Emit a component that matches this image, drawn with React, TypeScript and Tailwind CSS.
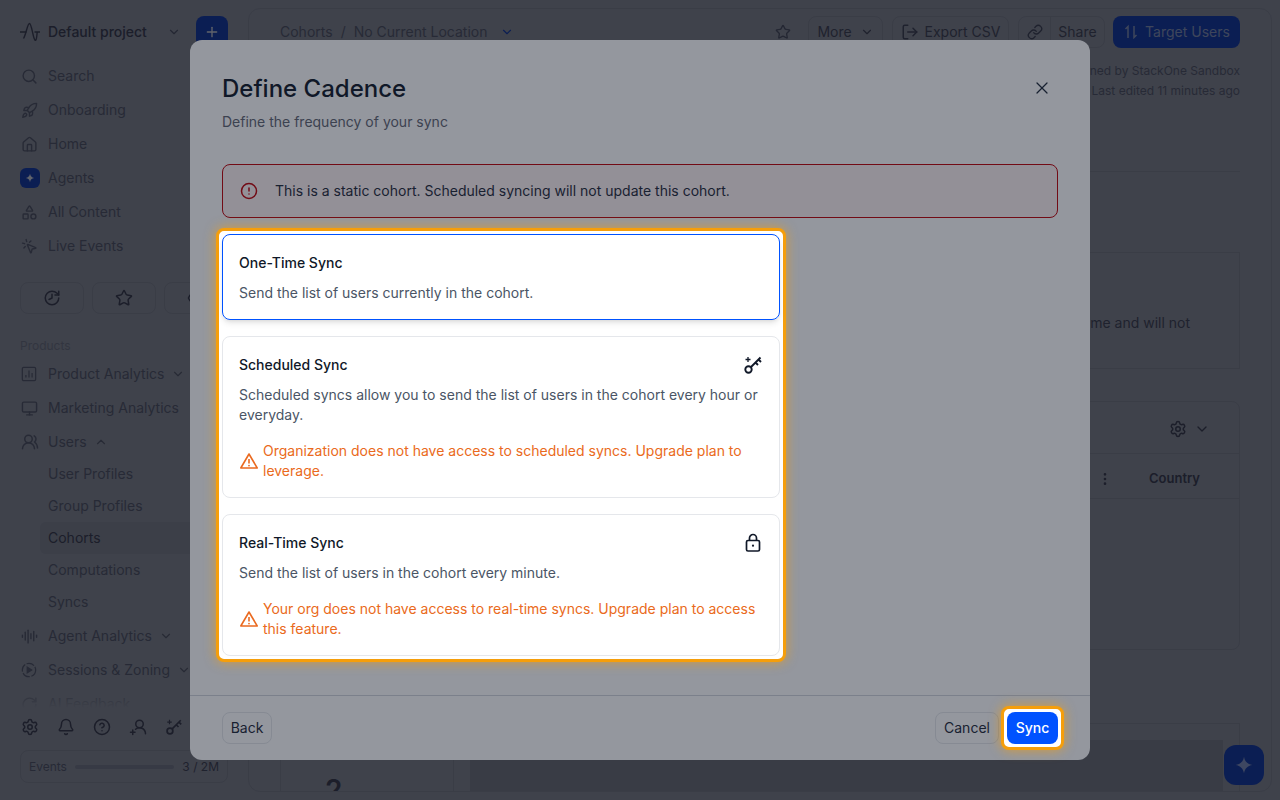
import {
  AudioLines,
  Bell,
  ChevronDown,
  ChevronUp,
  CircleAlert,
  CircleHelp,
  Eye,
  History,
  House,
  Link,
  LogOut,
  Monitor,
  MoreVertical,
  MousePointerClick,
  Plus,
  Rocket,
  RotateCw,
  Search,
  Settings,
  Shapes,
  Star,
  UserRoundPlus,
  UsersRound,
  X,
} from "lucide-react";
import type { ReactNode } from "react";

function Sparkle({ className }: { className?: string }) {
  return (
    <svg viewBox="0 0 24 24" className={className} fill="currentColor">
      <path d="M12 2c.8 5.6 4.4 9.200 10 10-5.600.8-9.200 4.400-10 10-.8-5.600-4.400-9.200-10-10 5.600-.8 9.200-4.400 10-10z" />
    </svg>
  );
}

function Logo() {
  return (
    <svg viewBox="0 0 20 20" className="h-5 w-5 text-[#32303b]" fill="none" stroke="currentColor" strokeWidth="1.400">
      <path d="M0 10h6.500M14.500 10H20" />
      <path d="M3.500 16.500C6 12.500 7.500 1.500 9.500 1.500c1.700 0 3 10 4.500 14.500.6 1.700 1.300 2.800 1.900 2.100.5-.6.9-3.100 1.300-8.100" />
    </svg>
  );
}

function KeySpark({ className }: { className?: string }) {
  return (
    <svg viewBox="0 0 20 20" className={className} fill="none" stroke="currentColor" strokeWidth="1.900">
      <circle cx="5.500" cy="14.500" r="3.200" />
      <path d="M8 12 17.500 2.500M12.500 7.500l2.500 2.500M15.500 4.500 18 7" />
      <path d="M5 2v5M2.500 4.500h5" strokeWidth="1.300" />
    </svg>
  );
}

function LockDot({ className }: { className?: string }) {
  return (
    <svg viewBox="0 0 20 20" className={className} fill="none" stroke="currentColor" strokeWidth="1.700">
      <rect x="3.500" y="7.500" width="13" height="10.500" rx="1.500" />
      <path d="M6.500 7.500V5a3.500 3.500 0 0 1 7 0v2.500" />
      <circle cx="10" cy="12.700" r="1.100" fill="currentColor" stroke="none" />
    </svg>
  );
}

function BarsBox({ className }: { className?: string }) {
  return (
    <svg viewBox="0 0 18 18" className={className} fill="none" stroke="currentColor" strokeWidth="1.400">
      <rect x="1.500" y="1.500" width="15" height="15" rx="1.500" />
      <path d="M5.500 13v-3M9 13V5M12.500 13V8" />
    </svg>
  );
}

function DashedPlay({ className }: { className?: string }) {
  return (
    <svg viewBox="0 0 18 18" className={className} fill="none" stroke="currentColor" strokeWidth="1.400">
      <circle cx="9" cy="9" r="7.500" strokeDasharray="9 1.800" />
      <path d="M7 5.800v6.400L12 9z" fill="currentColor" />
    </svg>
  );
}

function WarnTriangle({ className }: { className?: string }) {
  return (
    <svg viewBox="0 0 20 20" className={className} fill="none" stroke="currentColor" strokeWidth="1.600">
      <path d="M10 3 18.200 17H1.800z" strokeLinejoin="round" />
      <path d="M10 8v4.500" />
      <circle cx="10" cy="14.600" r=".9" fill="currentColor" stroke="none" />
    </svg>
  );
}

function NavRow({ icon, label, chevron }: { icon: ReactNode; label: string; chevron?: "down" | "up" }) {
  return (
    <div className="flex h-[34px] items-center pl-[1px] text-sm text-[#55555f]">
      <span className="flex w-[27px] shrink-0 items-center">{icon}</span>
      <span>{label}</span>
      {chevron === "down" && <ChevronDown className="ml-[7px] h-3.5 w-3.5" />}
      {chevron === "up" && <ChevronUp className="ml-[7px] h-3.5 w-3.5" />}
    </div>
  );
}

function SubRow({ label, active }: { label: string; active?: boolean }) {
  return (
    <div className={`ml-5 flex h-8 items-center rounded-md pl-2 text-sm ${active ? "bg-[#939396] text-[#32303b]" : "text-[#55555f]"}`}>
      {label}
    </div>
  );
}

function Sidebar() {
  return (
    <aside className="flex h-[800px] w-[248px] shrink-0 flex-col px-5">
      <div className="mt-4 flex h-8 items-center">
        <Logo />
        <span className="ml-2 whitespace-nowrap text-sm font-medium text-[#32303b]">Default project</span>
        <ChevronDown className="ml-5 h-3.5 w-3.5 shrink-0 text-[#4a4a55]" />
        <span className="ml-auto flex h-8 w-8 shrink-0 items-center justify-center rounded-lg bg-[#0030b8] text-white">
          <Plus className="h-4 w-4" />
        </span>
      </div>

      <div className="relative mt-[11px] h-[649px] overflow-hidden">
        <NavRow icon={<Search className="h-[17px] w-[17px]" />} label="Search" />
        <NavRow icon={<Rocket className="h-[17px] w-[17px]" />} label="Onboarding" />
        <NavRow icon={<House className="h-[17px] w-[17px]" />} label="Home" />
        <div className="flex h-[34px] items-center text-sm text-[#55555f]">
          <span className="mr-2 flex h-5 w-5 items-center justify-center rounded-md bg-[#0030b8] text-white">
            <Sparkle className="h-2.5 w-2.5" />
          </span>
          Agents
        </div>
        <NavRow icon={<Shapes className="h-[17px] w-[17px]" />} label="All Content" />
        <NavRow icon={<MousePointerClick className="h-[17px] w-[17px]" />} label="Live Events" />

        <div className="mt-[19px] grid grid-cols-3 gap-2">
          {[
            <History key="h" className="h-[18px] w-[18px] -scale-x-100" />,
            <Star key="s" className="h-[18px] w-[18px]" />,
            <Eye key="e" className="h-[18px] w-[18px]" />,
          ].map((icon, i) => (
            <span key={i} className="flex h-8 items-center justify-center rounded-lg border border-[#8e8e92] text-[#32303b]">
              {icon}
            </span>
          ))}
        </div>

        <div className="mt-6 text-xs leading-4 text-[#77777e]">Products</div>
        <div className="mt-[3px]">
          <NavRow icon={<BarsBox className="h-4 w-4" />} label="Product Analytics" chevron="down" />
          <NavRow icon={<Monitor className="h-[17px] w-[17px]" />} label="Marketing Analytics" />
          <NavRow icon={<UsersRound className="h-[18px] w-[18px]" />} label="Users" chevron="up" />
        </div>
        <div className="-mt-px">
          <SubRow label="User Profiles" />
          <SubRow label="Group Profiles" />
          <SubRow label="Cohorts" active />
          <SubRow label="Computations" />
          <SubRow label="Syncs" />
        </div>
        <div className="mt-px">
          <NavRow icon={<AudioLines className="h-[17px] w-[17px]" />} label="Agent Analytics" chevron="down" />
          <NavRow icon={<DashedPlay className="h-4 w-4" />} label="Sessions & Zoning" chevron="down" />
          <NavRow icon={<RotateCw className="h-[17px] w-[17px]" />} label="AI Feedback" />
        </div>
        <div className="absolute inset-x-0 bottom-0 h-5 bg-gradient-to-b from-transparent to-[#9c9c9f]" />
      </div>

      <div className="mt-[10px] flex h-[18px] items-center gap-[18px] pl-[1px] text-[#32303b]">
        <Settings className="h-[18px] w-[18px]" />
        <Bell className="h-[18px] w-[18px]" />
        <CircleHelp className="h-[18px] w-[18px]" />
        <UserRoundPlus className="h-[18px] w-[18px] -scale-x-100" />
        <KeySpark className="h-[18px] w-[18px]" />
      </div>

      <div className="mt-[14px] flex h-[33px] items-center rounded-lg border border-[#8e8e92] px-2 text-xs text-[#55555f]">
        <span className="shrink-0">Events</span>
        <span className="ml-2 h-1 min-w-0 flex-1 rounded-full bg-[#85858c]" />
        <span className="ml-2 shrink-0 whitespace-nowrap text-[#3c3b47]">3 / 2M</span>
      </div>
    </aside>
  );
}

function Main() {
  return (
    <main className="my-2 mr-2 flex h-[784px] w-[1024px] flex-col overflow-hidden rounded-xl border border-[#8e8e92] px-[31px] pt-[7px] text-[#3c3b47]">
      <header className="flex h-8 items-center text-sm">
        <span className="text-[#55555f]">Cohorts</span>
        <span className="mx-2 text-[#55555f]">/</span>
        <span className="text-[#55555f]">No Current Location</span>
        <ChevronDown className="ml-[13px] h-3.5 w-3.5 text-[#0030b8]" />
        <Star className="ml-auto h-4 w-4 text-[#4a4a55]" />
        <span className="ml-[17px] flex h-8 w-[75px] items-center justify-center gap-2 rounded-lg border border-[#8e8e92]">
          More <ChevronDown className="h-3.5 w-3.5" />
        </span>
        <span className="ml-[9px] flex h-8 w-[117px] items-center justify-center gap-1.5 rounded-lg border border-[#8e8e92]">
          <LogOut className="h-[18px] w-[18px]" /> Export CSV
        </span>
        <span className="ml-[9px] flex h-8 w-[87px] items-center rounded-lg border border-[#8e8e92]">
          <span className="flex h-full w-8 items-center justify-center border-r border-[#8e8e92]">
            <Link className="h-4 w-4" />
          </span>
          <span className="flex-1 text-center">Share</span>
        </span>
        <span className="ml-2 flex h-8 w-[127px] items-center justify-center gap-1.5 rounded-lg bg-[#0030b8] text-[#9aa8d0]">
          <svg viewBox="0 0 16 16" className="h-4 w-4" fill="none" stroke="currentColor" strokeWidth="1.500">
            <path d="M5 14V2.500L2.500 5M11 2v11.500L13.500 11" />
          </svg>
          Target Users
        </span>
      </header>

      <div className="mt-[13px] text-right text-xs leading-5 text-[#55555f]">
        <div>Owned by StackOne Sandbox</div>
        <div>Last edited 11 minutes ago</div>
      </div>

      <div className="mt-[70px] border-b border-[#8e8e92]" />

      <section className="mt-[80px] flex h-[118px] items-center justify-end border border-[#8e8e92] pt-6 pr-[49px] text-sm">
        <span className="whitespace-nowrap">This cohort was computed at a single point in time and will not</span>
      </section>

      <section className="mt-8 h-[249px] shrink-0 rounded-lg border border-[#8e8e92]">
        <div className="flex h-[52px] items-center justify-end gap-[7px] border-b border-[#8e8e92] pt-[2px] pr-[29px] text-[#32303b]">
          <Settings className="h-[18px] w-[18px]" />
          <ChevronDown className="h-4 w-4" />
        </div>
        <div className="flex h-[45px] items-center border-b border-[#8e8e92] pt-[6px] text-[13px] font-semibold text-[#32303b]">
          <MoreVertical className="ml-auto h-4 w-4" />
          <span className="ml-[36px] mr-[39px]">Country</span>
        </div>
      </section>

      <section className="mt-[73px] flex h-[68px] shrink-0 gap-4 border-t border-r border-[#8e8e92]">
        <div className="w-[174px] overflow-hidden border-x border-[#8e8e92] pt-[50px] pl-[44px] text-[28px] leading-8 font-semibold text-[#32303b]">
          2
        </div>
        <div className="mt-4 mr-4 flex-1 bg-[#8a8a8e]" />
      </section>
    </main>
  );
}

function WarnLine({ children }: { children: ReactNode }) {
  return (
    <div className="mt-4 flex items-center gap-1 text-sm leading-5 text-[#ea6a20]">
      <WarnTriangle className="h-5 w-5 shrink-0" />
      <span>{children}</span>
    </div>
  );
}

function Modal() {
  return (
    <div className="absolute left-[190px] top-[40px] flex h-[720px] w-[900px] flex-col rounded-xl bg-white">
      <div className="relative flex-1 px-8 pt-[33px]">
        <h2 className="text-2xl leading-8 font-medium text-gray-900">Define Cadence</h2>
        <p className="mt-[7px] text-sm leading-5 text-[#5f6472]">Define the frequency of your sync</p>
        <X strokeWidth={1.5} className="absolute right-[38px] top-[38px] h-5 w-5 text-gray-800" />

        <div className="mt-8 flex h-[54px] items-center gap-[17px] rounded-lg border border-red-700 bg-red-50 px-[17px] text-sm text-gray-800">
          <CircleAlert className="h-[18px] w-[18px] shrink-0 text-red-700" />
          This is a static cohort. Scheduled syncing will not update this cohort.
        </div>

        {/* highlighted group sits above the second overlay */}
        <div className="relative z-30 -mx-[6px] mt-[10px] w-[570px] rounded-lg border-[3px] border-[#f59e0b] bg-white p-[3px] shadow-[0_0_12px_#f59e0bb0]">
          <div className="rounded-lg border border-[#0052ff] p-4 shadow-md">
            <div className="text-sm leading-6 font-medium text-gray-900">One-Time Sync</div>
            <p className="mt-2 text-sm leading-5 text-gray-600">Send the list of users currently in the cohort.</p>
          </div>

          <div className="mt-4 rounded-lg border border-gray-200 p-4">
            <div className="flex items-center justify-between">
              <span className="text-sm leading-6 font-medium text-gray-900">Scheduled Sync</span>
              <KeySpark className="h-5 w-5 text-gray-900" />
            </div>
            <p className="mt-2 text-sm leading-5 text-gray-600">
              Scheduled syncs allow you to send the list of users in the cohort every hour or everyday.
            </p>
            <WarnLine>Organization does not have access to scheduled syncs. Upgrade plan to leverage.</WarnLine>
          </div>

          <div className="mt-4 rounded-lg border border-gray-200 p-4">
            <div className="flex items-center justify-between">
              <span className="text-sm leading-6 font-medium text-gray-900">Real-Time Sync</span>
              <LockDot className="h-5 w-5 text-gray-900" />
            </div>
            <p className="mt-2 text-sm leading-5 text-gray-600">Send the list of users in the cohort every minute.</p>
            <WarnLine>Your org does not have access to real-time syncs. Upgrade plan to access this feature.</WarnLine>
          </div>
        </div>
      </div>

      <footer className="flex h-[65px] items-center border-t border-gray-300 px-8 text-sm text-gray-800">
        <button className="h-8 w-[50px] rounded-lg border border-gray-200">Back</button>
        <button className="ml-auto h-8 w-[64px] rounded-lg border border-gray-200">Cancel</button>
        <span className="relative z-30 -mr-[6px] ml-[2px] rounded-lg border-[3px] border-[#f59e0b] bg-white p-[3px] shadow-[0_0_12px_#f59e0bb0]">
          <button className="block h-8 w-[51px] rounded-lg bg-[#0052ff] font-medium text-white">Sync</button>
        </span>
      </footer>
    </div>
  );
}

export default function App() {
  return (
    <div className="relative h-[800px] w-[1280px] overflow-hidden bg-[#9c9c9f] font-['Inter',sans-serif]">
      <div className="flex">
        <Sidebar />
        <Main />
      </div>
      <span className="absolute left-[1224px] top-[745px] flex h-10 w-10 items-center justify-center rounded-xl bg-[#0030b8] text-white/60">
        <Sparkle className="h-5 w-5" />
      </span>
      <div className="absolute inset-0 bg-[#111117]/40" />
      <Modal />
      <div className="absolute inset-0 z-20 bg-[#111827]/45" />
    </div>
  );
}
